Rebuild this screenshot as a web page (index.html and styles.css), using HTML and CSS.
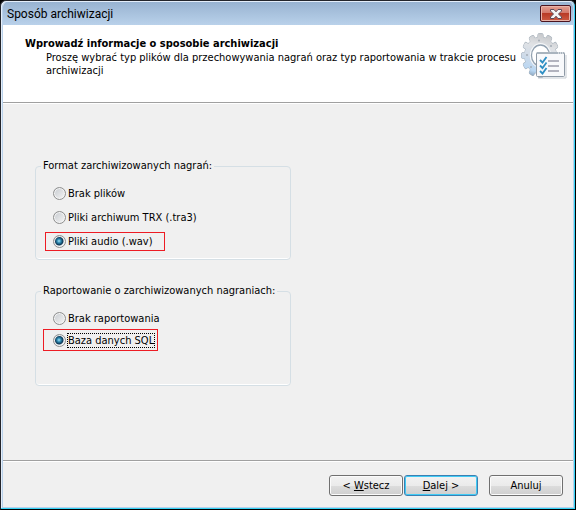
FILE: index.html
```html
<!DOCTYPE html>
<html lang="pl">
<head>
    <meta charset="UTF-8">
    <meta name="viewport" content="width=device-width, initial-scale=1.0">
    <title>Sposób archiwizacji</title>
    <link rel="stylesheet" href="styles.css">
</head>
<body>
    <form class="window">
        <div class="titlebar">
            <span class="caption">Sposób archiwizacji</span>
            <button type="button" class="close" aria-label="Zamknij">
                <svg width="12" height="10" viewBox="0 0 12 10">
                    <path d="M0.500 0.500h3.500L6 2.800 8 0.500h3.500v1.500L8.500 5l3 3v1.500H8L6 7.200 4 9.500H0.500V8l3-3-3-3z" fill="#f4f4f4" stroke="#5c4a58" stroke-width="1"/>
                </svg>
            </button>
        </div>

        <header class="header">
            <div class="intro">
                <h1>Wprowadź informacje o sposobie archiwizacji</h1>
                <p>Proszę wybrać typ plików dla przechowywania nagrań oraz typ raportowania w trakcie procesu archiwizacji</p>
            </div>
            <svg class="logo" width="46" height="46" viewBox="0 0 46 46">
                <defs>
                    <linearGradient id="metal" x1="0.600" y1="0" x2="0.400" y2="1">
                        <stop offset="0" stop-color="#c2c4c7"/>
                        <stop offset="0.300" stop-color="#e0e2e5"/>
                        <stop offset="0.550" stop-color="#d0dbe8"/>
                        <stop offset="0.850" stop-color="#b9d7f3"/>
                        <stop offset="1" stop-color="#7e98b0"/>
                    </linearGradient>
                    <g id="teeth">
                        <rect id="tooth" x="-3" y="-22" width="6" height="8" rx="1.500"/>
                        <use href="#tooth" transform="rotate(30)"/>
                        <use href="#tooth" transform="rotate(60)"/>
                        <use href="#tooth" transform="rotate(90)"/>
                        <use href="#tooth" transform="rotate(120)"/>
                        <use href="#tooth" transform="rotate(150)"/>
                        <use href="#tooth" transform="rotate(180)"/>
                        <use href="#tooth" transform="rotate(210)"/>
                        <use href="#tooth" transform="rotate(240)"/>
                        <use href="#tooth" transform="rotate(270)"/>
                        <use href="#tooth" transform="rotate(300)"/>
                        <use href="#tooth" transform="rotate(330)"/>
                        <circle r="18.500"/>
                    </g>
                    <mask id="gear" maskUnits="userSpaceOnUse" x="-23" y="-23" width="46" height="46">
                        <use href="#teeth" fill="#fff"/>
                    </mask>
                </defs>
                <g transform="translate(19.500 22.500) scale(0.860 1)">
                    <use href="#teeth" fill="#a4afba" stroke="#a4afba" stroke-width="1"/>
                    <rect x="-23" y="-23" width="46" height="46" fill="url(#metal)" mask="url(#gear)"/>
                    <circle r="12.500" fill="#f6f8fa"/>
                    <circle r="10.500" fill="#fff" stroke="#93a2b1" stroke-width="1.500"/>
                </g>
                <g fill="#a5adb6">
                    <circle cx="18" cy="7.500" r="1"/>
                    <circle cx="30" cy="13" r="1"/>
                    <circle cx="6" cy="22" r="1"/>
                    <circle cx="10" cy="34" r="1"/>
                </g>
                <rect x="15.500" y="19.500" width="28" height="24" rx="1" fill="#f8f9fb" stroke="#8f9aa6"/>
                <path d="M16 20h27" stroke="#a9b4be" stroke-width="2"/>
                <path d="M37 20h1M39 20h1M41 20h1" stroke="#fff"/>
                <path d="M45 22v23H17" fill="none" stroke="#c5cbd1"/>
                <path d="M27 28h11M27 33h11M27 38h11" stroke="#9a9cab" stroke-width="1.500"/>
                <path d="M19 27l2.500 2.500 4-5.500M19 32.500l2.500 2.500 4-5.500M19 38l2.500 2.500 4-5.500" fill="none" stroke="#2f8fc4" stroke-width="1.800"/>
            </svg>
        </header>

        <main class="content">
            <fieldset class="group files">
                <legend>Format zarchiwizowanych nagrań:</legend>
                <label class="option"><input type="radio" name="format"><span>Brak plików</span></label>
                <label class="option"><input type="radio" name="format"><span>Pliki archiwum TRX (.tra3)</span></label>
                <label class="option marked"><input type="radio" name="format" checked><span>Pliki audio (.wav)</span></label>
            </fieldset>

            <fieldset class="group reports">
                <legend>Raportowanie o zarchiwizowanych nagraniach:</legend>
                <label class="option"><input type="radio" name="report"><span>Brak raportowania</span></label>
                <label class="option marked"><input type="radio" name="report" checked><span class="focused">Baza danych SQL</span></label>
            </fieldset>
        </main>

        <footer class="footer">
            <div class="steps">
                <button type="button" class="btn">&lt; <u>W</u>stecz</button>
                <button type="submit" class="btn default"><u>D</u>alej &gt;</button>
            </div>
            <button type="button" class="btn">Anuluj</button>
        </footer>
    </form>
</body>
</html>
```
FILE: styles.css
```css
*{
    margin: 0;
    padding: 0;
    box-sizing: border-box;
}

body{
    background-color: #000;
    font-family: "DejaVu Sans Condensed", Tahoma, sans-serif;
    font-size: 11px;
    line-height: 13px;
    color: #000;
}

.window{
    display: flex;
    flex-direction: column;
    min-height: 100vh;
    background-color: #f0f0f0;
    border: 1px solid #23252b;
    border-right-color: #000;
    border-bottom-color: #000;
    border-radius: 6px 6px 0 0;
    box-shadow: inset -1px -1px #35d3f5, inset 1px 1px #e4eefa, inset 0 0 0 2px #b9d1ea;
    padding: 1px 2px 2px;
}

.titlebar{
    display: flex;
    justify-content: space-between;
    align-items: flex-start;
    height: 23px;
    padding: 3px 2px 0 4px;
    background: linear-gradient(#98b3d1, #b9d1ea);
    border-radius: 5px 5px 0 0;
}

.caption{
    font-family: Roboto, "Open Sans", sans-serif;
    font-size: 12px;
    line-height: 18px;
}

.close{
    display: flex;
    justify-content: center;
    align-items: center;
    width: 31px;
    height: 17px;
    border: 1px solid #4b1420;
    border-radius: 2px;
    background: linear-gradient(#e3a093, #d4786a 45%, #b93a26 50%, #cd5a42);
    box-shadow: inset 0 0 0 1px #e8b3a8;
}

.header{
    display: flex;
    justify-content: space-between;
    align-items: flex-start;
    min-height: 78px;
    padding: 8px 6px 8px 22px;
    background-color: #fff;
    border-bottom: 1px solid #a0a0a0;
}

.intro{
    padding-top: 4px;
}

.intro h1{
    font-size: 11px;
    line-height: 14px;
}

.intro p{
    padding-left: 21px;
}

.logo{
    flex: none;
}

.content{
    flex: 1;
    display: flex;
    flex-direction: column;
    gap: 24px;
    padding: 55px 32px 24px;
    border-top: 1px solid #fff;
    border-bottom: 1px solid #a0a0a0;
}

.group{
    width: 100%;
    max-width: 256px;
    border: 1px solid #d5dfe5;
    border-radius: 4px;
    box-shadow: inset 0 -1px #fff;
}

.group legend{
    margin-left: -2px;
    padding: 0 2px;
    line-height: 14px;
}

.files{
    display: grid;
    justify-items: start;
    gap: 5px;
    padding: 11px 7px 8px;
}

.reports{
    display: grid;
    justify-items: start;
    padding: 9px 7px 34px;
}

.option{
    display: flex;
    align-items: center;
    gap: 1px;
    border: 1px solid transparent;
}

.files .option{
    height: 19px;
    margin-left: 2px;
    padding: 0 10px 0 7px;
}

.reports .option{
    height: 22px;
    padding: 0 2px 0 9px;
}

.group .marked{
    border-color: #ed1c24;
}

.option span{
    border: 1px dotted transparent;
}

.option .focused{
    border-color: #000;
}

.option input{
    appearance: none;
    width: 13px;
    height: 13px;
    border: 1px solid #8e8f8f;
    border-radius: 50%;
    background: linear-gradient(135deg, #c6cacf, #f6f6f6);
    box-shadow: inset 0 0 0 1px #f4f4f4;
}

.option input:checked{
    background: radial-gradient(circle at 5px 5px, #a5e4fa 0, #2a86ad 2px, #0d3350 4px, #e2e8ec 5px);
}

.footer{
    display: flex;
    justify-content: flex-end;
    gap: 11px;
    padding: 13px 10px 11px;
    border-top: 1px solid #fff;
}

.steps{
    display: flex;
    gap: 1px;
}

.btn{
    width: 74px;
    height: 21px;
    font: inherit;
    border: 1px solid #707070;
    border-radius: 3px;
    background: linear-gradient(#f2f2f2, #ebebeb 50%, #dddddd 50%, #cfcfcf);
    box-shadow: inset 0 0 0 1px #fbfbfb;
}

.default{
    border-color: #3c7fb1;
    box-shadow: inset 0 0 0 1px #40cbf5;
}
```
